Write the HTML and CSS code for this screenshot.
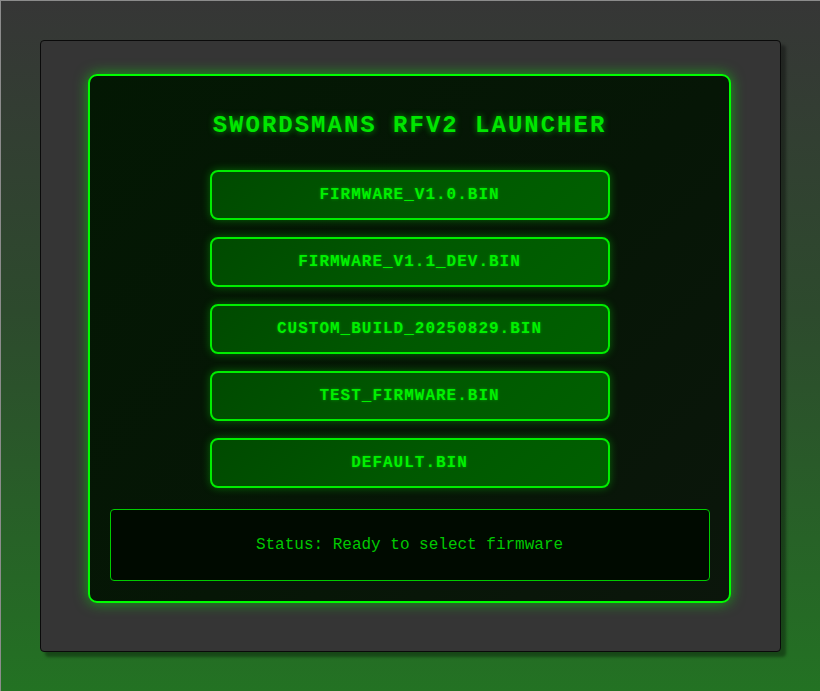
FILE: index.html
```html
<!DOCTYPE html>
<html>
<head>
<meta charset="utf-8">
<link rel="stylesheet" href="styles.css">
</head>
<body>
<div class="screen">
  <div class="window">
    <div class="panel">
      <h1 class="title">SWORDSMANS RFV2 LAUNCHER</h1>
      <div class="list">
        <button class="fw">FIRMWARE_V1.0.BIN</button>
        <button class="fw">FIRMWARE_V1.1_DEV.BIN</button>
        <button class="fw">CUSTOM_BUILD_20250829.BIN</button>
        <button class="fw">TEST_FIRMWARE.BIN</button>
        <button class="fw">DEFAULT.BIN</button>
      </div>
      <div class="status">Status: Ready to select firmware</div>
    </div>
  </div>
</div>
</body>
</html>
```

FILE: styles.css
```css
html, body {
  margin: 0;
  padding: 0;
  height: 100%;
}
body {
  background: linear-gradient(to bottom, #363636 0%, #2d4a2d 45%, #237223 100%);
  font-family: "Liberation Mono", "Courier New", monospace;
  overflow: hidden;
}
.screen {
  box-sizing: border-box;
  height: 691px;
  border-top: 1px solid #8c8c8c;
  border-left: 1px solid #8c8c8c;
  display: flex;
  align-items: center;
  justify-content: center;
}
.window {
  box-sizing: border-box;
  width: 741px;
  height: 612px;
  background: #353535;
  border: 1px solid #0a0a0a;
  border-radius: 4px;
  box-shadow: 5px 5px 3px rgba(0, 0, 0, 0.35);
  padding: 33px 49px 48px 47px;
}
.panel {
  box-sizing: border-box;
  height: 529px;
  border: 2px solid #00ff00;
  border-radius: 9px;
  background: linear-gradient(135deg, #031803 0%, #061606 55%, #0b160b 100%);
  box-shadow: 0 0 14px rgba(0, 255, 0, 0.55);
  padding: 20px 19px 20px 19px;
  display: flex;
  flex-direction: column;
  align-items: center;
}
.title {
  margin: 16px 0 0 0;
  font-family: "Liberation Mono", "Courier New", monospace;
  font-size: 24px;
  font-weight: bold;
  line-height: 27px;
  letter-spacing: 2px;
  color: #00e600;
  text-shadow: 0 0 6px rgba(0, 255, 0, 0.6);
}
.list {
  margin-top: 31px;
  display: flex;
  flex-direction: column;
  gap: 17px;
}
.fw {
  box-sizing: border-box;
  width: 400px;
  height: 50px;
  border: 2px solid #00ee00;
  border-radius: 8px;
  background: linear-gradient(135deg, #004a00 0%, #005800 50%, #006000 100%);
  box-shadow: 0 0 8px rgba(0, 255, 0, 0.35);
  color: #00f000;
  font-family: "Liberation Mono", "Courier New", monospace;
  font-weight: bold;
  font-size: 16px;
  letter-spacing: 1px;
  text-shadow: 0 0 3px rgba(0, 255, 0, 0.4);
  padding: 0;
  cursor: pointer;
}
.status {
  box-sizing: border-box;
  margin-top: 21px;
  width: 600px;
  height: 72px;
  border: 1px solid #00cc00;
  border-radius: 4px;
  background: #000a00;
  color: #00c800;
  font-size: 16px;
  display: flex;
  align-items: center;
  justify-content: center;
}
```
